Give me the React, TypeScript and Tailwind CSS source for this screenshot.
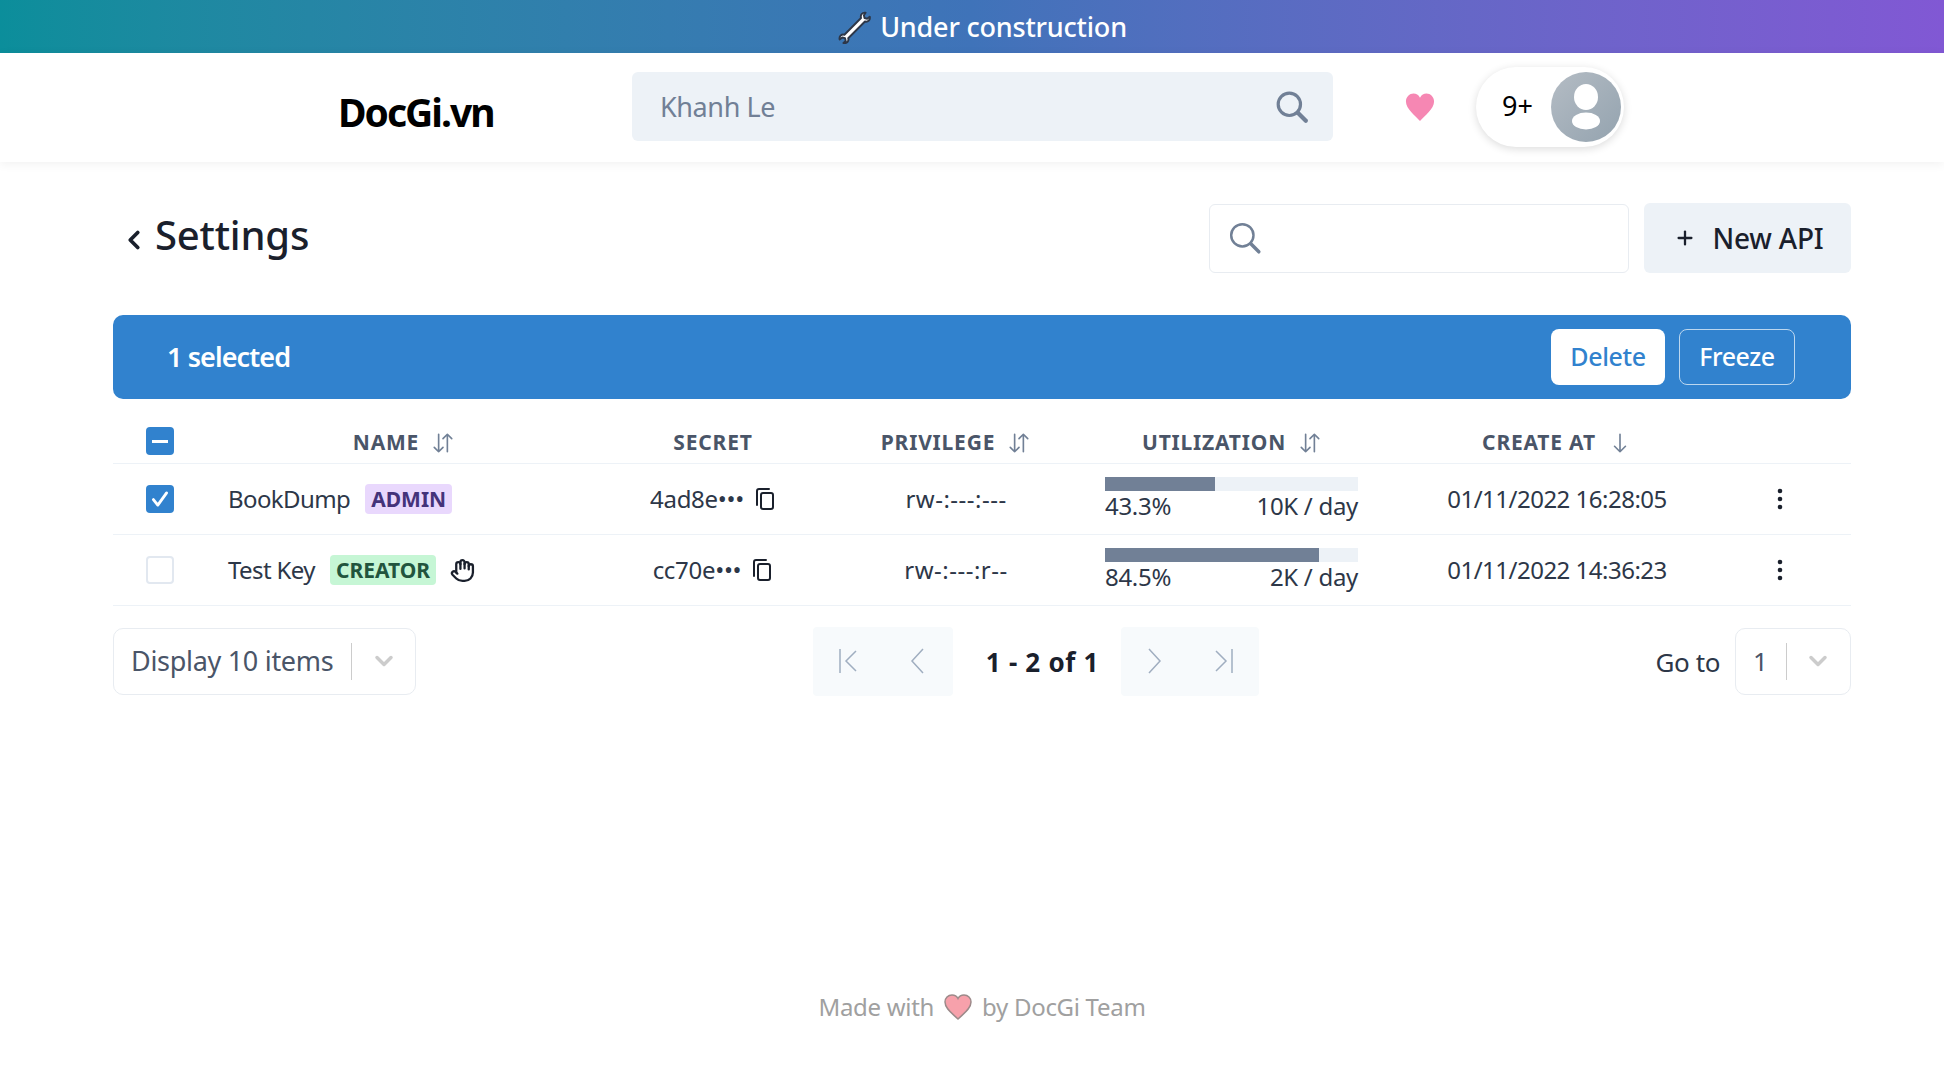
import React from "react";
import { Hand, Plus, ChevronLeft, ChevronDown } from "lucide-react";

const font = { fontFamily: '"Noto Sans", "Open Sans", sans-serif' };
const grid = "grid grid-cols-[115px_352px_266px_220px_332px_318px_135px] items-center";

function Lens({ size, width }: { size: number; width: number }) {
  return (
    <svg width={size} height={size} viewBox="0 0 32 32" fill="none" stroke="#718096" strokeWidth={width} strokeLinecap="round">
      <circle cx="13.500" cy="13.500" r="10.500" />
      <path d="M21.500 21.500L29 29" strokeWidth={width + 1} />
    </svg>
  );
}
function SortBoth() {
  return (
    <svg width="24" height="24" viewBox="0 0 22 22" fill="none" stroke="#718096" strokeWidth="1.500" strokeLinecap="round" strokeLinejoin="round" className="ml-3">
      <path d="M7 3v16M3 15l4 4 4-4" />
      <path d="M15 19V3M11 7l4-4 4 4" />
    </svg>
  );
}
function SortDown() {
  return (
    <svg width="24" height="24" viewBox="0 0 22 22" fill="none" stroke="#718096" strokeWidth="1.500" strokeLinecap="round" strokeLinejoin="round" className="ml-3">
      <path d="M11 3v16M6 14l5 5 5-5" />
    </svg>
  );
}
function CopyIcon() {
  return (
    <svg width="24" height="24" viewBox="0 0 24 24" fill="none" stroke="#1a202c" strokeWidth="2" strokeLinejoin="round" strokeLinecap="round" className="ml-2">
      <path d="M5 18V4a2 2 0 0 1 2-2h10" />
      <rect x="9" y="6" width="12" height="16" rx="2" />
    </svg>
  );
}
function Dots() {
  return (
    <svg width="8" height="24" viewBox="0 0 8 24" fill="#1a202c">
      <circle cx="4" cy="4" r="2.300" />
      <circle cx="4" cy="12" r="2.300" />
      <circle cx="4" cy="20" r="2.300" />
    </svg>
  );
}
function Wrench() {
  return (
    <svg width="36" height="34" viewBox="0 0 34 32" className="mr-[7px]">
      <path d="M27 2.500c-3-.6-5.200 2-4.300 5L7 23.300c-3-.8-5.200 1.600-4.500 4.600l2.500-2 2.600.6.6 2.600-2.100 2c3 .8 5.400-1.700 4.500-4.500L26.400 10.800c3 .8 5.300-1.700 4.500-4.600l-2.400 2-2.500-.7-.6-2.500z" fill="#fff" stroke="#2d3748" strokeWidth="1.800" strokeLinejoin="round" />
    </svg>
  );
}
function Avatar() {
  return (
    <div className="w-[70px] h-[70px] rounded-full bg-gradient-to-br from-[#b4bcc4] to-[#94a3af] flex items-center justify-center">
      <svg width="40" height="46" viewBox="0 0 40 46" fill="#fff">
        <ellipse cx="20" cy="13" rx="12" ry="13" />
        <ellipse cx="20" cy="37" rx="14" ry="8.500" />
      </svg>
    </div>
  );
}
function Pick({ children, className }: { children: React.ReactNode; className: string }) {
  return (
    <div className={"h-[67px] rounded-[10px] border border-[#e8ecf1] bg-white flex items-center " + className}>
      {children}
    </div>
  );
}
function Row(p: { name: string; badge: string; badgeClass: string; hand?: boolean; secret: string; priv: string; pct: number; quota: string; date: string; checked?: boolean }) {
  return (
    <div className={grid + " h-[71px] border-b border-[#edf2f7] text-[24px] text-[#2d3748]"}>
      <div className="pl-[33px]">
        {p.checked ? (
          <div className="w-[28px] h-[28px] rounded-[4px] bg-[#3182ce] flex items-center justify-center">
            <svg width="22" height="22" viewBox="0 0 20 20" fill="none" stroke="#fff" strokeWidth="2.600" strokeLinecap="round" strokeLinejoin="round"><path d="M4 10.500l4 5 8-11" /></svg>
          </div>
        ) : (
          <div className="w-[28px] h-[28px] rounded-[4px] border-2 border-[#e2e8f0] bg-white" />
        )}
      </div>
      <div className="flex items-center">
        <span className="tracking-[-0.6px]">{p.name}</span>
        <span className={"ml-[15px] px-[6px] h-[30px] flex items-center rounded-[4px] text-[21px] font-bold leading-none " + p.badgeClass}>{p.badge}</span>
        {p.hand && <Hand size={25} strokeWidth={2.200} className="ml-[14px] text-[#1a202c]" />}
      </div>
      <div className="flex items-center justify-center tracking-[-0.3px]">
        <span>{p.secret}•••</span>
        <CopyIcon />
      </div>
      <div className="text-center tracking-[0.5px]">{p.priv}</div>
      <div className="flex justify-center pr-[1px]">
        <div className="w-[253px]">
          <div className="h-[14px] bg-[#edf2f7]">
            <div className="h-full bg-[#718096]" style={{ width: p.pct + "%" }} />
          </div>
          <div className="flex justify-between leading-[30px] text-[24px] tracking-[-0.3px]">
            <span>{p.pct}%</span>
            <span>{p.quota}</span>
          </div>
        </div>
      </div>
      <div className="text-center tracking-[-0.5px]">{p.date}</div>
      <div className="flex justify-center pr-[7px]"><Dots /></div>
    </div>
  );
}

export default function App() {
  return (
    <div style={font} className="min-h-[1080px] bg-white text-[#1a202c] overflow-hidden">
      <div className="h-[53px] bg-gradient-to-r from-[#0b8e9b] via-[#3f73b9] to-[#8158d4] flex items-center justify-center text-white text-[27px] font-medium tracking-[-0.2px] pl-[20px] pt-[1px]">
        <Wrench />
        <span>Under construction</span>
      </div>

      <header className="h-[109px] bg-white shadow-[0_2px_10px_rgba(0,0,0,0.06)] flex items-center pl-[338px] pb-[2px]">
        <div className="w-[294px] text-[39px] font-bold text-black tracking-[-2px] pt-[12px]">DocGi.vn</div>
        <div className="w-[701px] h-[69px] rounded-[6px] bg-[#edf2f7] flex items-center justify-between pl-[28px] pr-[24px]">
          <span className="text-[27px] text-[#718096] tracking-[-0.4px] pt-[2px]">Khanh Le</span>
          <Lens size={34} width={3} />
        </div>
        <svg width="30" height="30" viewBox="0 0 32 30" className="ml-[72px]" fill="#f687b3">
          <path d="M16 30C11 24 1 17 1 9c0-5 4-8.500 8-8.500 3 0 5.500 1.500 7 4.500 1.500-3 4-4.500 7-4.500 4 0 8 3.500 8 8.500 0 8-10 15-15 21z" />
        </svg>
        <div className="ml-[41px] w-[148px] h-[80px] rounded-full bg-white shadow-[0_2px_8px_rgba(0,0,0,0.14)] flex items-center justify-end pr-[3px]">
          <span className="mr-[18px] text-[27px] text-black">9+</span>
          <Avatar />
        </div>
      </header>

      <main className="pl-[113px] pr-[93px]">
        <div className="flex items-center h-[70px] mt-[41px]">
          <ChevronLeft size={30} strokeWidth={3} className="ml-[6px] mr-[6px] mt-[4px] text-[#1a202c]" />
          <h1 className="text-[40px] font-medium tracking-[-0.2px] -mt-[6px]">Settings</h1>
          <div className="ml-auto w-[420px] h-[69px] rounded-[6px] border border-[#e8ecf1] bg-white flex items-center pl-[18px]">
            <Lens size={34} width={2.300} />
          </div>
          <div className="ml-[15px] w-[207px] h-[70px] rounded-[6px] bg-[#edf2f7] flex items-center justify-center text-[28px] font-medium pl-[3px]">
            <Plus size={22} strokeWidth={2.500} className="mr-[16px]" />
            <span className="tracking-[-0.2px]">New API</span>
          </div>
        </div>

        <div className="h-[84px] mt-[42px] rounded-[10px] bg-[#3182ce] flex items-center pl-[54px] pr-[56px] text-white">
          <span className="text-[27px] font-semibold tracking-[-0.9px]">1 selected</span>
          <button className="ml-auto w-[114px] h-[56px] rounded-[8px] bg-white text-[#3182ce] text-[25px] font-medium tracking-[-0.4px]">Delete</button>
          <button className="ml-[14px] w-[116px] h-[56px] rounded-[8px] border border-[#bcd7ef] text-white text-[25px] font-medium tracking-[-0.4px]">Freeze</button>
        </div>

        <div className={grid + " h-[65px] border-b border-[#edf2f7] text-[21px] font-bold text-[#4a5568] tracking-[0.8px]"}>
          <div className="pl-[33px] pt-[20px]">
            <div className="w-[28px] h-[28px] rounded-[4px] bg-[#3182ce] flex items-center justify-center">
              <div className="w-[16px] h-[3px] bg-white" />
            </div>
          </div>
          <div className="flex items-center justify-center pt-[23px]">NAME<SortBoth /></div>
          <div className="flex items-center justify-center pt-[23px]">SECRET</div>
          <div className="flex items-center justify-center pt-[23px]">PRIVILEGE<SortBoth /></div>
          <div className="flex items-center justify-center pt-[23px]">UTILIZATION<SortBoth /></div>
          <div className="flex items-center justify-center pt-[23px]">CREATE AT<SortDown /></div>
          <div />
        </div>
        <Row checked name="BookDump" badge="ADMIN" badgeClass="bg-[#e9d8fd] text-[#44337a]" secret="4ad8e" priv="rw-:---:---" pct={43.3} quota="10K / day" date="01/11/2022 16:28:05" />
        <Row hand name="Test Key" badge="CREATOR" badgeClass="bg-[#c6f6d5] text-[#22543d]" secret="cc70e" priv="rw-:---:r--" pct={84.5} quota="2K / day" date="01/11/2022 14:36:23" />

        <div className="flex items-center mt-[20px] h-[70px]">
          <Pick className="w-[303px]">
            <span className="pl-[17px] w-[237px] text-[27px] text-[#4a5568] tracking-[-0.3px] whitespace-nowrap">Display 10 items</span>
            <div className="w-px h-[37px] bg-[#cccccc]" />
            <ChevronDown size={28} strokeWidth={3} className="ml-[18px] text-[#cccccc]" />
          </Pick>
          <div className="ml-[397px] w-[140px] h-[69px] bg-[#f7fafc] rounded-[4px] flex items-center pl-[24px] gap-[47px]">
            <svg width="22" height="28" viewBox="0 0 22 28" fill="none" stroke="#a0aec0" strokeWidth="1.500"><path d="M3 2v24M19 4L9 14l10 10" /></svg>
            <svg width="22" height="28" viewBox="0 0 22 28" fill="none" stroke="#a0aec0" strokeWidth="1.500"><path d="M17 2L6 14l11 12" /></svg>
          </div>
          <div className="w-[168px] text-center text-[26px] font-bold text-[#1a202c] tracking-[0.7px] pl-[11px] pt-[3px]">1 - 2 of 1</div>
          <div className="w-[138px] h-[69px] bg-[#f7fafc] rounded-[4px] flex items-center pl-[23px] gap-[47px]">
            <svg width="22" height="28" viewBox="0 0 22 28" fill="none" stroke="#a0aec0" strokeWidth="1.500"><path d="M5 2l11 12L5 26" /></svg>
            <svg width="22" height="28" viewBox="0 0 22 28" fill="none" stroke="#a0aec0" strokeWidth="1.500"><path d="M3 4l10 10L3 24M19 2v24" /></svg>
          </div>
          <span className="ml-auto mr-[15px] text-[26px] tracking-[-0.4px] text-[#2d3748] pt-[2px]">Go to</span>
          <Pick className="w-[116px]">
            <span className="pl-[17px] w-[50px] text-[26px] text-[#4a5568]">1</span>
            <div className="w-px h-[37px] bg-[#cccccc]" />
            <ChevronDown size={28} strokeWidth={3} className="ml-[17px] text-[#cccccc]" />
          </Pick>
        </div>

        <footer className="mt-[293px] flex items-center justify-center text-[24px] tracking-[-0.3px] text-[#a0a0a0]">
          <span>Made with</span>
          <svg width="30" height="28" viewBox="0 0 30 28" className="mx-[9px]">
            <path d="M15 26C10 21 2 16 2 9c0-4 3-7 7-7 3 0 5 1.500 6 3.500C16 3.500 18 2 21 2c4 0 7 3 7 7 0 7-8 12-13 17z" fill="#f7a1ab" stroke="#9c8a8a" strokeWidth="1.500" />
          </svg>
          <span>by DocGi Team</span>
        </footer>
      </main>
    </div>
  );
}
